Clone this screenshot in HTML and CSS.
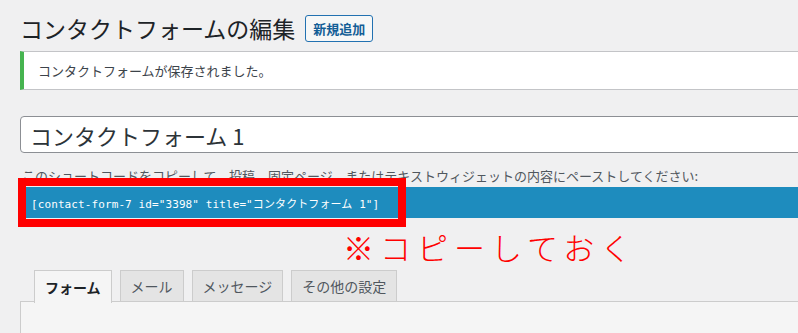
FILE: index.html
```html
<!DOCTYPE html>
<html lang="ja">
<head>
    <meta charset="UTF-8">
    <meta name="viewport" content="width=device-width, initial-scale=1.0">
    <title>コンタクトフォームの編集</title>
    <link rel="stylesheet" href="styles.css">
</head>
<body>
    <div class="wrap">
        <div class="page-head">
            <h1>コンタクトフォームの編集</h1>
            <a class="add-new" href="#">新規追加</a>
        </div>

        <div class="notice">
            <p>コンタクトフォームが保存されました。</p>
        </div>

        <input class="form-title" type="text" value="コンタクトフォーム 1">

        <p class="desc">このショートコードをコピーして、投稿、固定ページ、またはテキストウィジェットの内容にペーストしてください:</p>

        <div class="shortcode">
            <span class="code">[contact-form-7 id="3398" title="コンタクトフォーム 1"]</span>
            <div class="mark"></div>
        </div>

        <p class="note">※コピーしておく</p>

        <div class="tabs">
            <span class="tab active">フォーム</span>
            <span class="tab">メール</span>
            <span class="tab">メッセージ</span>
            <span class="tab">その他の設定</span>
        </div>
        <div class="panel"></div>
    </div>
</body>
</html>
```

FILE: styles.css
```css
body {
    margin: 0;
    background: #f0f0f1;
    font-family: "Noto Sans CJK JP", "Liberation Sans", sans-serif;
    color: #3c434a;
    overflow: hidden;
}

.wrap {
    padding-left: 20px;
    margin-right: -20px;
}

/* heading + button */
.page-head {
    display: flex;
    align-items: center;
    gap: 10px;
    margin-top: 15px;
    height: 27px;
}
.page-head h1 {
    margin: 0;
    font-size: 23px;
    font-weight: 400;
    color: #1d2327;
    line-height: 27px;
}
.add-new {
    display: flex;
    align-items: center;
    height: 25px;
    padding: 0 7px;
    border: 1px solid #2271b1;
    border-radius: 3px;
    color: #135e96;
    font-size: 13px;
    font-weight: 600;
    text-decoration: none;
    background: #f6f7f7;
}

/* saved notice */
.notice {
    margin-top: 9px;
    background: #fff;
    border-top: 1px solid #c3c4c7;
    border-bottom: 1px solid #c3c4c7;
    border-left: 4px solid #46b450;
    height: 37px;
    display: flex;
    align-items: center;
}
.notice p {
    margin: 0 0 0 14px;
    font-size: 13px;
    color: #3c434a;
}

/* title field */
.form-title {
    display: block;
    box-sizing: border-box;
    width: 100%;
    margin-top: 26px;
    height: 37px;
    padding: 0 9px;
    border: 1px solid #8c8f94;
    border-radius: 4px;
    background: #fff;
    font-family: "Noto Sans CJK JP", sans-serif;
    font-size: 22px;
    color: #2c3338;
}

.desc {
    margin: 13px 0 0 2px;
    font-size: 13px;
    line-height: 20px;
    color: #50575e;
}

/* shortcode bar */
.shortcode {
    position: relative;
    margin: 1px 0 0 6px;
    height: 31px;
    background: #1e8cbe;
    display: flex;
    align-items: center;
}
.code {
    margin-left: 5px;
    color: #fff;
    font-family: "DejaVu Sans Mono", "Noto Sans CJK JP", monospace;
    font-size: 11px;
    letter-spacing: 0.1px;
}
.mark {
    position: absolute;
    left: -8px;
    top: -9px;
    width: 372px;
    height: 33px;
    border: 8px solid #ff0000;
}

/* handwritten note */
.note {
    margin: 12px 0 0 323px;
    font-size: 31px;
    line-height: 34px;
    font-weight: 300;
    letter-spacing: 6px;
    color: #ff0000;
}

/* tabs */
.tabs {
    display: flex;
    gap: 8px;
    margin: 6px 0 0 14px;
    height: 31px;
}
.tab {
    display: flex;
    align-items: center;
    padding: 0 10px;
    border: 1px solid #ccc;
    border-bottom: none;
    background: #e4e4e4;
    font-size: 14px;
    color: #50575e;
}
.tab.active {
    background: #f5f5f5;
    color: #1d2327;
    font-weight: 700;
    height: 32px;
    position: relative;
    z-index: 1;
}

.panel {
    height: 60px;
    border: 1px solid #ccc;
    background: #f5f5f5;
}
```
